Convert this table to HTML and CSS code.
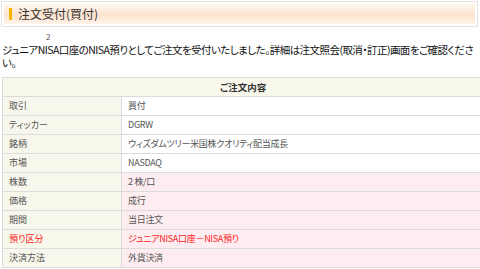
FILE: index.html
```html
<!DOCTYPE html>
<html lang="ja">
<head>
<meta charset="utf-8">
<link rel="stylesheet" href="styles.css">
</head>
<body>
<div class="title-box">
  <div class="title-inner">
    <span class="title-mark"></span>
    <h1 class="title">注文受付(買付)</h1>
  </div>
</div>
<div class="note-num">2</div>
<p class="message">ジュニアNISA口座のNISA預りとしてご注文を受付いたしました。詳細は注文照会(取消・訂正)画面をご確認ください。</p>
<div class="table-wrap">
<table class="order">
  <thead>
    <tr><th colspan="2">ご注文内容</th></tr>
  </thead>
  <tbody>
    <tr><td class="label">取引</td><td class="value">買付</td></tr>
    <tr><td class="label">ティッカー</td><td class="value">DGRW</td></tr>
    <tr><td class="label">銘柄</td><td class="value">ウィズダムツリー米国株クオリティ配当成長</td></tr>
    <tr><td class="label">市場</td><td class="value">NASDAQ</td></tr>
    <tr class="pink"><td class="label">株数</td><td class="value">2 株/口</td></tr>
    <tr class="pink"><td class="label">価格</td><td class="value">成行</td></tr>
    <tr class="pink"><td class="label">期間</td><td class="value">当日注文</td></tr>
    <tr class="pink red"><td class="label">預り区分</td><td class="value">ジュニアNISA口座－NISA預り</td></tr>
    <tr class="pink"><td class="label">決済方法</td><td class="value">外貨決済</td></tr>
  </tbody>
</table>
</div>
</body>
</html>
```
FILE: styles.css
```css
html, body {
  margin: 0;
  padding: 0;
  overflow: hidden;
}
body {
  padding: 1px 2px 0 1px;
  font-family: "Noto Sans CJK JP", "Noto Sans", sans-serif;
  font-feature-settings: "palt";
  color: #333;
  background: #fff;
}
.title-box {
  border: 1px solid #e2e2e2;
  padding: 2px;
  background: #fff;
}
.title-inner {
  display: flex;
  align-items: center;
  gap: 6px;
  height: 20px;
  padding-left: 5px;
  background: linear-gradient(#fff7ef, #fde3cf 55%, #fff4ea);
}
.title-mark {
  width: 3px;
  height: 12px;
  background: #f7b500;
}
.title {
  margin: 0;
  font-size: 12px;
  font-weight: normal;
  color: #333;
  line-height: 1;
}
.note-num {
  margin: 5px 0 0 45px;
  font-size: 8px;
  line-height: 10px;
  color: #555;
}
.message {
  margin: 1px 0 0 1px;
  font-size: 10.5px;
  line-height: 13px;
  letter-spacing: -0.55px;
  color: #111;
}
.table-wrap {
  margin: 8px 0 0 1px;
  width: 478px;
  overflow: hidden;
}
.order {
  width: 482px;
  border-collapse: collapse;
  font-size: 9px;
}
.order th,
.order td {
  box-sizing: border-box;
  height: 19px;
  line-height: 16px;
  border: 1px solid #dcdcdc;
}
.order th {
  padding: 0;
  background: #f8f7ec;
  font-size: 9.5px;
  font-weight: bold;
  color: #333;
  text-align: center;
}
.order td {
  padding: 0 0 0 6px;
  color: #555;
}
.order td.label {
  width: 119px;
  background: #f8f7ec;
}
.order td.value {
  background: #fff;
  letter-spacing: -0.3px;
}
.order tr.pink td.value {
  background: #fdedf0;
}
.order tr.red td {
  color: #f22;
}
```
